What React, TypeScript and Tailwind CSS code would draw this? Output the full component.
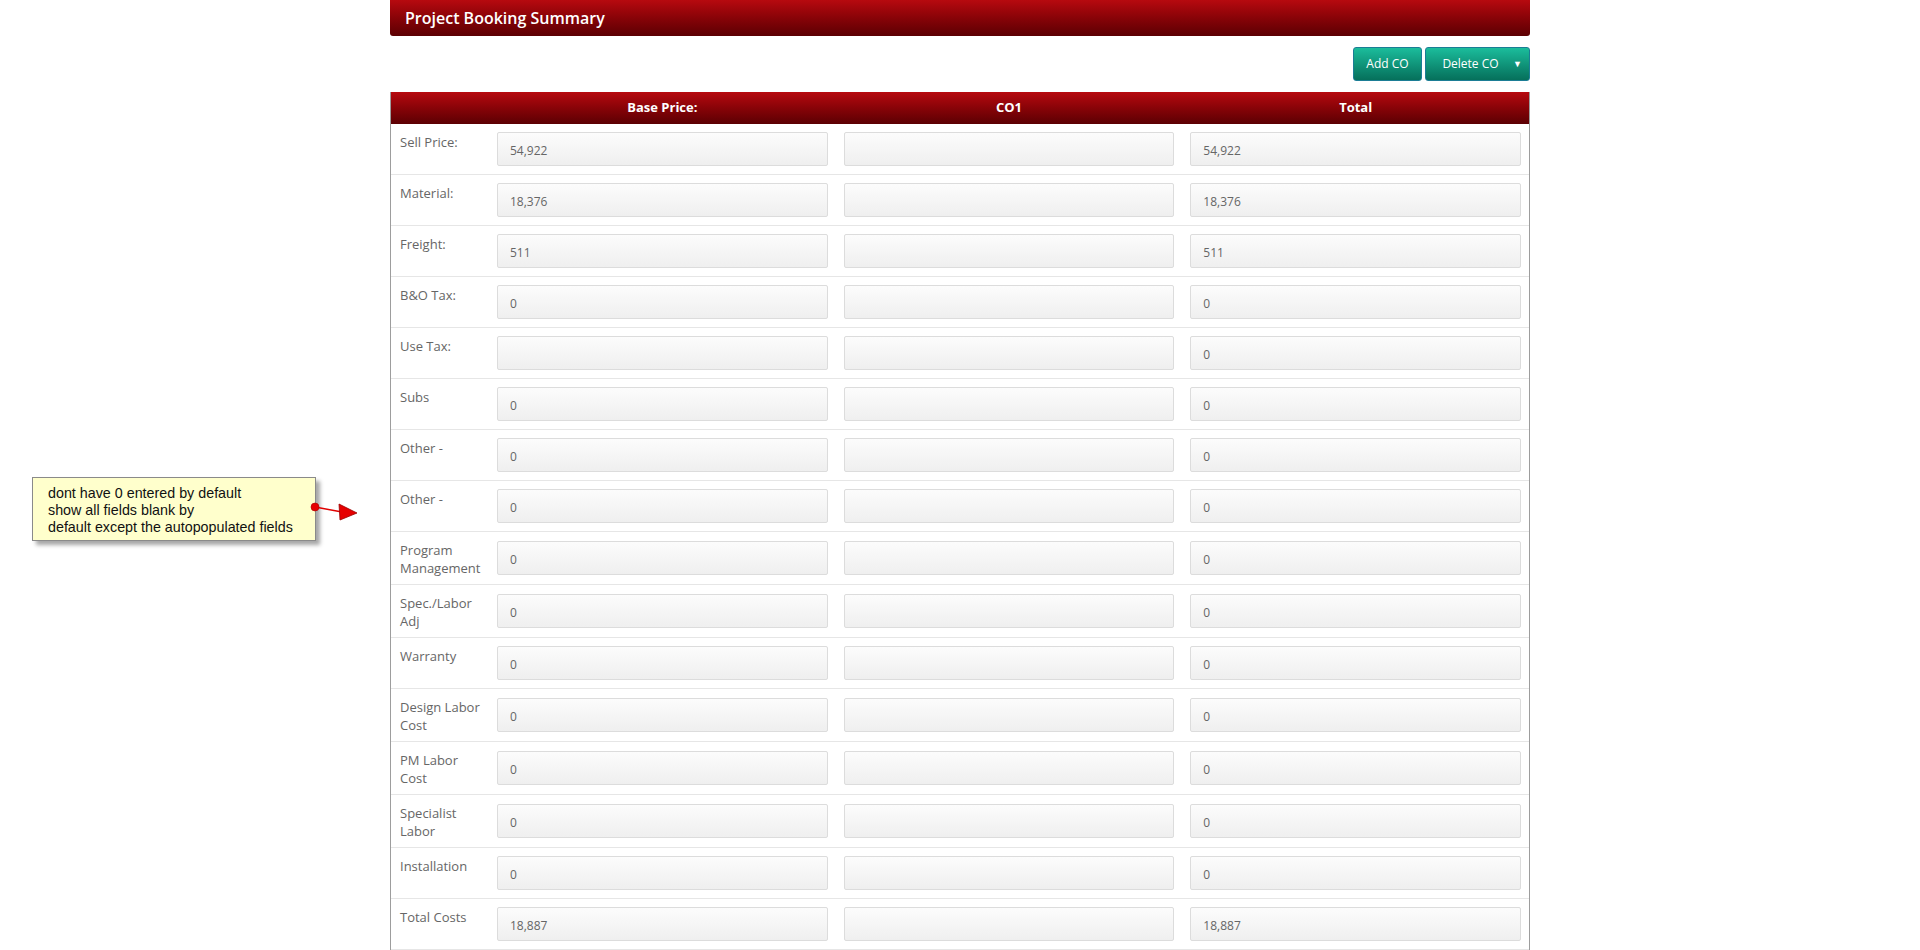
import React from 'react';

interface Row {
    label: string;
    base: string;
    total: string;
}

const rows: Row[] = [
    { label: 'Sell Price:', base: '54,922', total: '54,922' },
    { label: 'Material:', base: '18,376', total: '18,376' },
    { label: 'Freight:', base: '511', total: '511' },
    { label: 'B&O Tax:', base: '0', total: '0' },
    { label: 'Use Tax:', base: '', total: '0' },
    { label: 'Subs', base: '0', total: '0' },
    { label: 'Other -', base: '0', total: '0' },
    { label: 'Other -', base: '0', total: '0' },
    { label: 'Program Management', base: '0', total: '0' },
    { label: 'Spec./Labor Adj', base: '0', total: '0' },
    { label: 'Warranty', base: '0', total: '0' },
    { label: 'Design Labor Cost', base: '0', total: '0' },
    { label: 'PM Labor Cost', base: '0', total: '0' },
    { label: 'Specialist Labor', base: '0', total: '0' },
    { label: 'Installation', base: '0', total: '0' },
    { label: 'Total Costs', base: '18,887', total: '18,887' },
];

function Field({ value }: { value: string }) {
    return (
        <input
            readOnly
            value={value}
            className="h-[34px] w-full rounded-[2px] border border-[#dcdcdc] bg-gradient-to-b from-[#fcfcfc] to-[#efefef] pl-[12px] pt-[3px] text-[12px] text-[#666] outline-none"
        />
    );
}

export default function App() {
    return (
        <div className="relative min-h-[950px] bg-white font-['Open_Sans',sans-serif]">
            {/* Review note pinned on the screenshot */}
            <div className="absolute left-[32px] top-[477px] h-[64px] w-[284px] border border-[#8a8a8a] bg-[#ffffcc] pl-[15px] pt-[7px] font-['Liberation_Sans',Arial,sans-serif] text-[14.3px] leading-[17px] text-[#111] shadow-[4px_4px_4px_rgba(0,0,0,0.35)]">
                <div>dont have 0 entered by default</div>
                <div>show all fields blank by</div>
                <div>default except the autopopulated fields</div>
            </div>
            <svg className="absolute left-[300px] top-[495px]" width="64" height="32" viewBox="0 0 64 32">
                <line x1="15" y1="12" x2="42" y2="17" stroke="#e00000" strokeWidth="1.5" />
                <polygon points="39,9 57,18 40,25" fill="#e60000" stroke="#900" strokeWidth="0.8" />
                <circle cx="15" cy="12" r="4" fill="#e60000" stroke="#a00" strokeWidth="0.6" />
            </svg>

            <div className="mx-auto w-[1140px]">
                {/* Title bar */}
                <div className="flex h-[36px] items-center rounded-b-[3px] bg-gradient-to-b from-[#b70a0f] to-[#5c0003] px-[15px]">
                    <h1 className="text-[16px] font-semibold text-white">Project Booking Summary</h1>
                </div>

                {/* Actions */}
                <div className="mt-[11px] flex justify-end gap-[3px]">
                    <button className="h-[34px] w-[69px] rounded-[3px] border border-[#1b7d95] bg-gradient-to-b from-[#1bbd9c] to-[#06705b] text-[12px] text-white">
                        Add CO
                    </button>
                    <button className="relative h-[34px] w-[105px] rounded-[3px] border border-[#1b7d95] bg-gradient-to-b from-[#1bbd9c] to-[#06705b] pr-[14px] text-[12px] text-white">
                        Delete CO
                        <span className="absolute right-[7px] top-[9px] text-[9px]">▼</span>
                    </button>
                </div>

                {/* Summary table */}
                <div className="mt-[11px] border-x border-[#9d9d9d]">
                    <div className="grid h-[32px] grid-cols-[98px_1fr_1fr_1fr] items-center bg-gradient-to-b from-[#b70a0f] to-[#5c0003] text-[13px] font-bold text-white">
                        <div />
                        <div className="text-center">Base Price:</div>
                        <div className="text-center">CO1</div>
                        <div className="text-center">Total</div>
                    </div>
                    {rows.map((row, i) => (
                        <div key={i} className="grid grid-cols-[98px_1fr_1fr_1fr] border-b border-[#e6e6e6]">
                            <div className="pb-[7px] pl-[9px] pr-[6px] pt-[9px] text-[13px] leading-[18px] text-[#666]">
                                {row.label}
                            </div>
                            <div className="flex items-center px-[8px] py-[8px]">
                                <Field value={row.base} />
                            </div>
                            <div className="flex items-center px-[8px] py-[8px]">
                                <Field value="" />
                            </div>
                            <div className="flex items-center px-[8px] py-[8px]">
                                <Field value={row.total} />
                            </div>
                        </div>
                    ))}
                </div>
            </div>
        </div>
    );
}
